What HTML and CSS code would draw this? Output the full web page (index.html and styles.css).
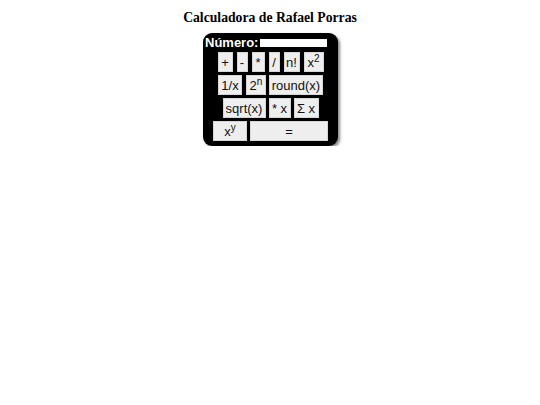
FILE: index.html
```html
<!DOCTYPE html>
<html>
<head>
<meta charset="utf-8">
<link rel="stylesheet" href="styles.css">
</head>
<body>
<h1 class="title">Calculadora de Rafael Porras</h1>
<div class="calc">
  <div class="display">
    <span class="label">Número:</span>
    <input class="num" type="text">
  </div>
  <div class="row row-first">
    <button class="btn b-plus">+</button>
    <button class="btn b-minus">-</button>
    <button class="btn b-mul">*</button>
    <button class="btn b-div">/</button>
    <button class="btn b-fact">n!</button>
    <button class="btn b-sq">x<sup>2</sup></button>
  </div>
  <div class="row">
    <button class="btn b-inv">1/x</button>
    <button class="btn b-pow2">2<sup>n</sup></button>
    <button class="btn b-round">round(x)</button>
  </div>
  <div class="row">
    <button class="btn b-sqrt">sqrt(x)</button>
    <button class="btn b-prod">* x</button>
    <button class="btn b-sum">Σ x</button>
  </div>
  <div class="row">
    <button class="btn b-xy">x<sup>y</sup></button>
    <button class="btn b-eq">=</button>
  </div>
</div>
</body>
</html>
```
FILE: styles.css
```css
html, body {
  margin: 0;
  padding: 0;
  background: #fff;
}
body {
  font-family: "Liberation Serif", serif;
}
.title {
  margin: 9px 0 0 0;
  font-size: 13.7px;
  font-weight: bold;
  text-align: center;
  line-height: 17px;
  color: #000;
}
.calc {
  width: 135px;
  height: 113px;
  margin: 7px 0 0 203px;
  background: #000;
  border-radius: 9px;
  box-shadow: 2px 2px 3px #888;
  box-sizing: border-box;
  padding: 2px 0 0 0;
  font-family: "Liberation Sans", Arial, sans-serif;
}
.display {
  display: flex;
  align-items: center;
  height: 15px;
  padding-left: 2px;
}
.label {
  color: #fff;
  font-weight: bold;
  font-size: 13px;
  line-height: 15px;
}
.num {
  width: 67px;
  height: 8px;
  margin: 1px 0 0 2px;
  padding: 0;
  border: none;
  background: #fff;
  box-sizing: border-box;
}
.row {
  display: flex;
  justify-content: center;
  gap: 3px;
  margin-top: 3px;
}
.row-first {
  margin-top: 2px;
  gap: 4px;
}
.row-second {
  gap: 3px;
}
.btn {
  font-family: "Liberation Sans", Arial, sans-serif;
  font-size: 13px;
  line-height: 15px;
  height: 20px;
  padding: 0;
  margin: 0;
  background: #eeeeee;
  border: 1px solid #d6d6d6;
  color: #111;
  box-sizing: border-box;
  border-radius: 0;
  white-space: nowrap;
}
.btn sup {
  font-size: 10px;
  line-height: 0;
  vertical-align: 5px;
}
.b-plus { width: 15px; }
.b-minus { width: 11px; }
.b-mul { width: 13px; }
.b-div { width: 11px; }
.b-fact { width: 16px; }
.b-sq { width: 20px; }
.b-inv { width: 24px; }
.b-pow2 { width: 20px; margin-left: 1px; }
.b-round { width: 54px; }
.b-sqrt { width: 43px; }
.b-prod { width: 22px; }
.b-sum { width: 25px; }
.b-xy { width: 34px; }
.b-eq { width: 78px; }
```
